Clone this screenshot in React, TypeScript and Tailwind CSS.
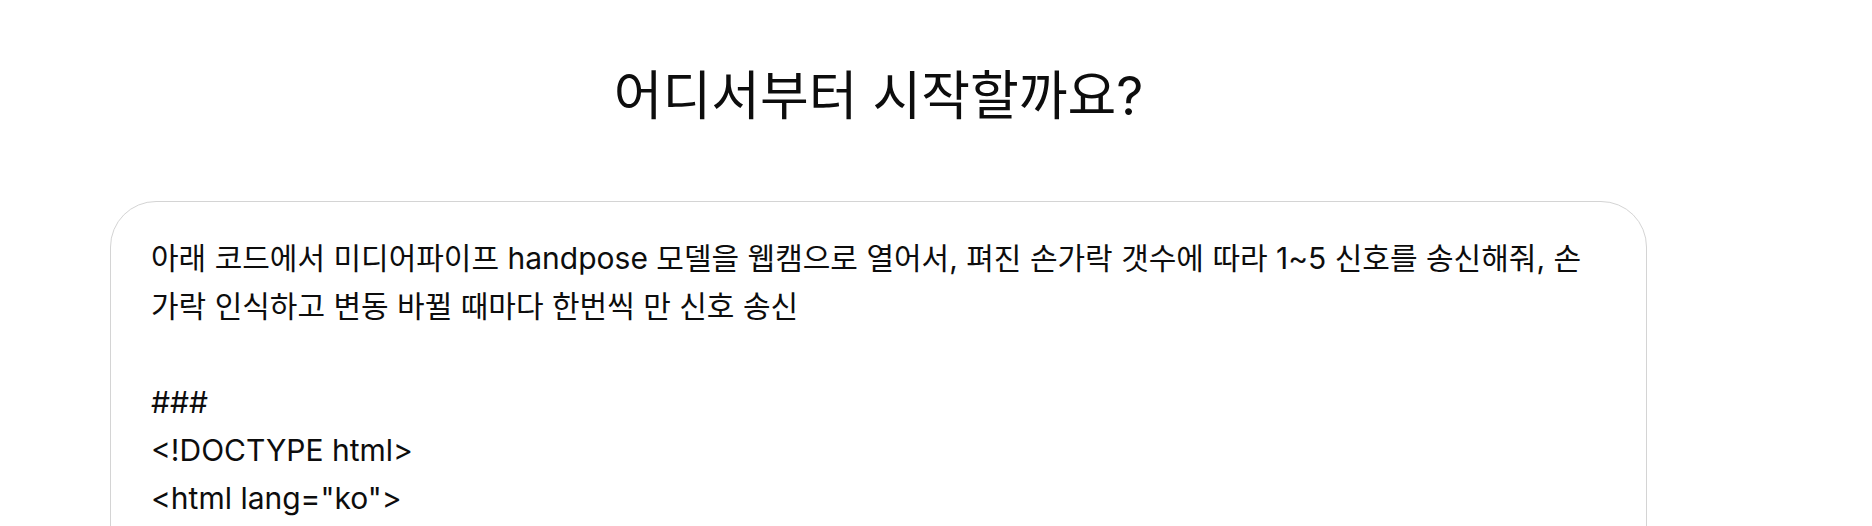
import React from 'react'

const lines = [
  '아래 코드에서 미디어파이프 handpose 모델을 웹캠으로 열어서, 펴진 손가락 갯수에 따라 1~5 신호를 송신해줘, 손',
  '가락 인식하고 변동 바뀔 때마다 한번씩 만 신호 송신',
  '',
  '###',
  '<!DOCTYPE html>',
  '<html lang="ko">',
]

const App = () => {
  return (
    <div
      className="h-[526px] w-full overflow-hidden bg-white text-[#0d0d0d]"
      style={{ fontFamily: 'Inter, "Noto Sans CJK KR", sans-serif' }}
    >
      <div className="flex flex-col items-center pl-[110px] pr-[225px]">
        <h1 className="mt-[58px] text-[53px] leading-[76px]">어디서부터 시작할까요?</h1>
        <div className="mt-[67px] h-[400px] w-full rounded-[46px] border border-[#d4d4d4] px-[40px] pt-[32px]">
          {lines.map((line, i) => (
            <div key={i} className="h-[48px] whitespace-pre text-[30px] leading-[48px]">
              {line}
            </div>
          ))}
        </div>
      </div>
    </div>
  )
}

export default App
